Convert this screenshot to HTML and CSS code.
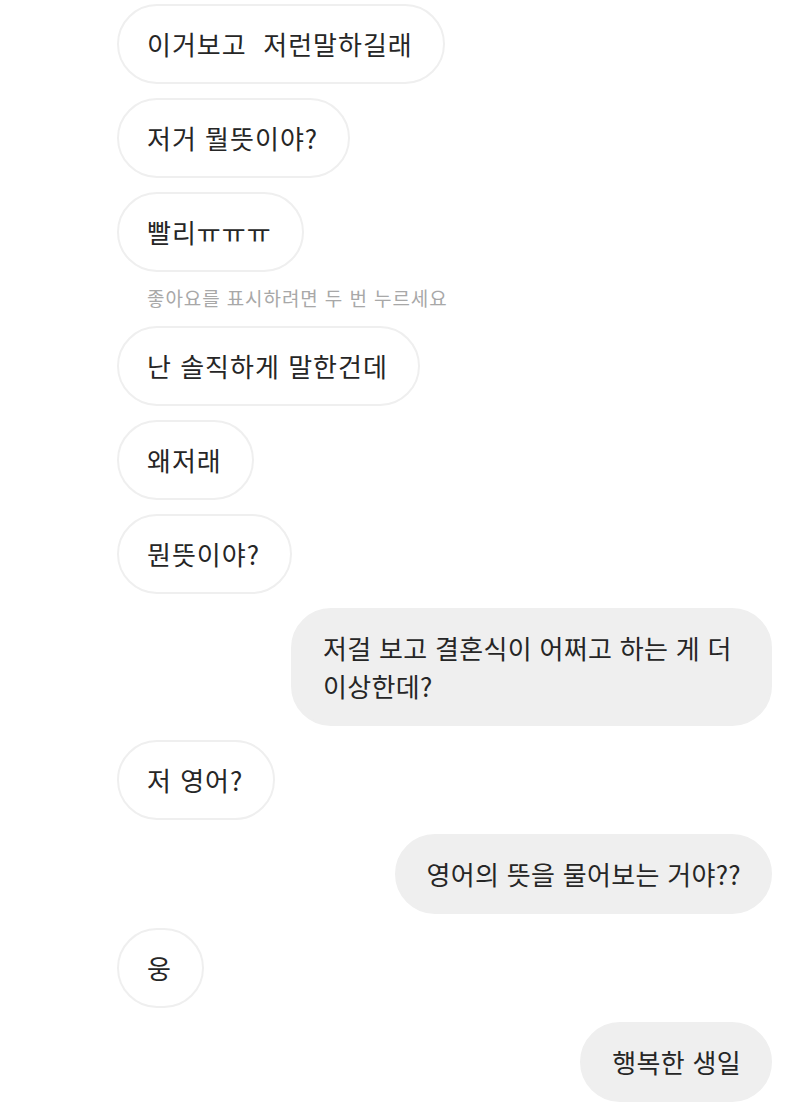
FILE: index.html
```html
<!DOCTYPE html>
<html lang="ko">
<head>
<meta charset="utf-8">
<title>DM</title>
<link rel="stylesheet" href="styles.css">
</head>
<body>
<main class="thread">
  <div class="row in"><div class="bubble">이거보고&nbsp; 저런말하길래</div></div>
  <div class="row in"><div class="bubble">저거 뭘뜻이야?</div></div>
  <div class="row in"><div class="bubble">빨리ㅠㅠㅠ</div></div>
  <div class="hint">좋아요를 표시하려면 두 번 누르세요</div>
  <div class="row in"><div class="bubble">난 솔직하게 말한건데</div></div>
  <div class="row in"><div class="bubble">왜저래</div></div>
  <div class="row in"><div class="bubble">뭔뜻이야?</div></div>
  <div class="row out"><div class="bubble">저걸 보고 결혼식이 어쩌고 하는 게 더 이상한데?</div></div>
  <div class="row in"><div class="bubble">저 영어?</div></div>
  <div class="row out"><div class="bubble">영어의 뜻을 물어보는 거야??</div></div>
  <div class="row in"><div class="bubble">웅</div></div>
  <div class="row out"><div class="bubble">행복한 생일</div></div>
</main>
</body>
</html>
```

FILE: styles.css
```css
html, body {
  margin: 0;
  padding: 0;
  background: #ffffff;
}

.thread {
  width: 800px;
  height: 1110px;
  overflow: hidden;
  box-sizing: border-box;
  padding: 4px 28px 0 117px;
  display: flex;
  flex-direction: column;
  gap: 14px;
  font-family: "Noto Sans CJK KR", "Noto Sans", sans-serif;
  color: #262626;
}

.row {
  display: flex;
}

.row.in {
  justify-content: flex-start;
}

.row.out {
  justify-content: flex-end;
}

.bubble {
  box-sizing: border-box;
  max-width: 481px;
  min-height: 80px;
  padding: 19px 29px;
  border-radius: 40px;
  font-size: 26px;
  line-height: 38px;
  letter-spacing: 1px;
  word-break: keep-all;
}

.row.in .bubble {
  background: #ffffff;
  border: 2px solid #efefef;
  padding: 19px 30px 19px 28px;
}

.row.out .bubble {
  background: #efefef;
  border: 2px solid #efefef;
  padding: 19px 29px 19px 30px;
  letter-spacing: 0.3px;
}

.hint {
  margin: 0 0 2px 30px;
  font-size: 19px;
  line-height: 24px;
  color: #a8a8a8;
  letter-spacing: 0.9px;
}
```
